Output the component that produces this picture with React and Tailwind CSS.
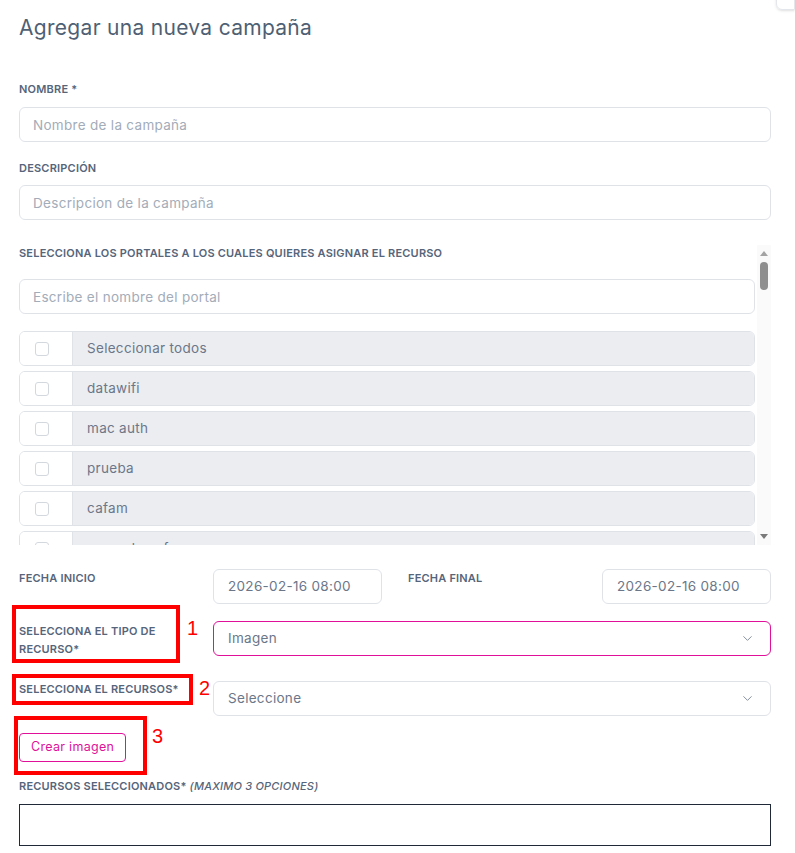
import React from "react";
import { ChevronDown } from "lucide-react";

const portales = ["Seleccionar todos", "datawifi", "mac auth", "prueba", "cafam", "mesa de cafam"];

function Label({ children, className = "" }) {
  return (
    <div className={`text-[11px] font-semibold uppercase leading-4 tracking-[0.2px] text-[#56657a] ${className}`}>
      {children}
    </div>
  );
}

function TextInput({ placeholder }) {
  return (
    <input
      placeholder={placeholder}
      className="h-[35px] w-full rounded-[6px] border border-[#dfe3e8] px-[13px] text-[13.5px] tracking-[0.3px] text-[#56657a] outline-none placeholder:text-[#a3acb9]"
    />
  );
}

function Select({ value, active }) {
  return (
    <div
      className={`flex h-[35px] flex-1 items-center justify-between rounded-[6px] border pl-[14px] pr-[15px] text-[13.5px] tracking-[0.3px] text-[#6b7789] ${
        active ? "border-[#e0109a]" : "border-[#dfe3e8]"
      }`}
    >
      <span>{value}</span>
      <ChevronDown size={15} strokeWidth={1.5} className="text-[#7d8797]" />
    </div>
  );
}

function Mark({ n, className }) {
  return (
    <span className={`absolute text-[20px] leading-none text-[#ff0000] font-['Liberation_Sans',sans-serif] ${className}`}>
      {n}
    </span>
  );
}

export default function App() {
  return (
    <div className="relative min-h-screen bg-white pl-[19px] pr-[24px] pb-4 font-['Inter',sans-serif]">
      <div className="absolute right-0 top-[-10px] h-[20px] w-[19px] rounded-bl-[6px] border border-[#e3e6ea] shadow-sm" />

      <h2 className="pt-[14px] text-[21px] leading-7 text-[#4f5f74] tracking-[0.3px]">Agregar una nueva campaña</h2>

      <Label className="mt-[39px]">Nombre *</Label>
      <div className="mt-[10px]">
        <TextInput placeholder="Nombre de la campaña" />
      </div>

      <Label className="mt-[18px]">Descripción</Label>
      <div className="mt-[9px]">
        <TextInput placeholder="Descripcion de la campaña" />
      </div>

      {/* lista de portales con scroll */}
      <div className="mt-[25px] flex h-[300px] overflow-hidden">
        <div className="flex-1">
          <Label>Selecciona los portales a los cuales quieres asignar el recurso</Label>
          <div className="mt-[18px]">
            <TextInput placeholder="Escribe el nombre del portal" />
          </div>
          <div className="mt-[17px] flex flex-col gap-[5px]">
            {portales.map((p) => (
              <div key={p} className="flex h-[35px] overflow-hidden rounded-[6px] border border-[#dfe3e8]">
                <div className="flex w-[52px] items-center bg-white pl-[15px]">
                  <div className="h-[14px] w-[14px] rounded-[3px] border border-[#d3d8de]" />
                </div>
                <div className="flex flex-1 items-center border-l border-[#dfe3e8] bg-[#ebedf1] pl-[14px] text-[13.5px] tracking-[0.3px] text-[#6b7789]">
                  {p}
                </div>
              </div>
            ))}
          </div>
        </div>
        <div className="ml-[2px] flex w-[14px] flex-col items-center bg-[#fafafa] pt-[6px] pb-[6px]">
          <div className="h-0 w-0 border-x-[4px] border-b-[5px] border-x-transparent border-b-[#a3a3a3]" />
          <div className="mt-[6px] h-[28px] w-[8px] rounded-full bg-[#8f8f8f]" />
          <div className="flex-1" />
          <div className="h-0 w-0 border-x-[4px] border-t-[5px] border-x-transparent border-t-[#7a7a7a]" />
        </div>
      </div>

      {/* fechas */}
      <div className="mt-[24px] flex gap-[26px]">
        <div className="flex flex-1">
          <Label className="mt-[1px] w-[194px]">Fecha inicio</Label>
          <div className="flex h-[35px] flex-1 items-center rounded-[6px] border border-[#dfe3e8] pl-[14px] text-[13.5px] tracking-[0.3px] text-[#6b7789]">
            2026-02-16 08:00
          </div>
        </div>
        <div className="flex flex-1">
          <Label className="mt-[1px] w-[194px]">Fecha final</Label>
          <div className="flex h-[35px] flex-1 items-center rounded-[6px] border border-[#dfe3e8] pl-[14px] text-[13.5px] tracking-[0.3px] text-[#6b7789]">
            2026-02-16 08:00
          </div>
        </div>
      </div>

      <div className="mt-[17px] flex h-[35px]">
        <div className="relative w-[194px] pt-[1px]">
          <Label className="w-[150px] leading-[18px]">Selecciona el tipo de recurso*</Label>
          <div className="absolute left-[-7px] top-[-16px] h-[58px] w-[168px] border-[4px] border-[#ff0000]" />
          <Mark n="1" className="left-[168px] top-[-3px]" />
        </div>
        <Select value="Imagen" active />
      </div>

      <div className="mt-[25px] flex">
        <div className="relative w-[194px]">
          <Label>Selecciona el recursos*</Label>
          <div className="absolute left-[-7px] top-[-7px] h-[31px] w-[181px] border-[4px] border-[#ff0000]" />
          <Mark n="2" className="left-[180px] top-[-3px]" />
        </div>
        <Select value="Seleccione" />
      </div>

      <div className="relative mt-[17px] w-fit">
        <button className="h-[29px] rounded-[4px] border border-[#e0109a] px-[11px] text-[12.5px] tracking-[0.3px] text-[#e0109a]">
          Crear imagen
        </button>
        <div className="absolute left-[-5px] top-[-17px] h-[59px] w-[133px] border-[4px] border-[#ff0000]" />
        <Mark n="3" className="left-[133px] top-[-7px]" />
      </div>

      <Label className="mt-[16px]">
        Recursos seleccionados* <span className="italic font-medium">(Maximo 3 opciones)</span>
      </Label>
      <div className="mt-[10px] h-[42px] border border-[#1f2937]" />
    </div>
  );
}
